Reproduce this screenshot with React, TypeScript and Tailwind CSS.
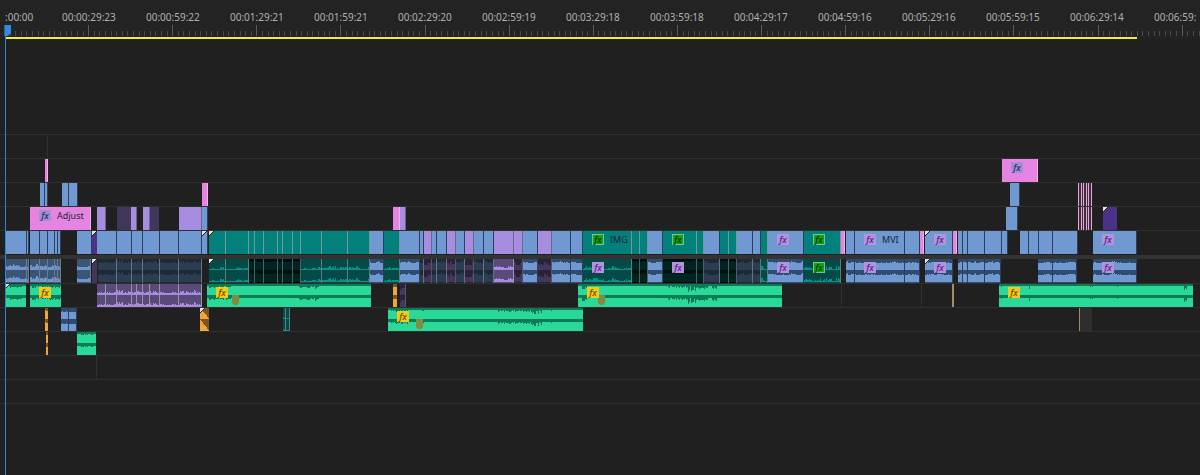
import clsx from "clsx";

type Kind =
  | "blue"
  | "teal"
  | "pink"
  | "purple"
  | "dim"
  | "indigo"
  | "stripe"
  | "ghost"
  | "blueLow"
  | "blueHigh"
  | "navy"
  | "tealLow"
  | "black"
  | "plum"
  | "purpleLow"
  | "green"
  | "orange"
  | "tan"
  | "grey";

type Extra = {
  fx?: "violet" | "green" | "yellow" | "plain";
  label?: string;
  corner?: boolean;
  marker?: number;
  ramp?: boolean;
  // [offset, width, depth]
  dips?: number[][];
};

type ClipData = [number, number, Kind, Extra?];

const kinds: Record<Kind, string> = {
  blue: "bg-[#7099d1] border-r border-[#2c3f5c]",
  teal: "bg-[#02807c] border-r border-[#6f9c99]",
  pink: "bg-[#e584e2] border-r border-[#efb4ea]",
  purple: "bg-[#a78de0] border-r border-[#6f6390]",
  dim: "bg-[#40375a]",
  indigo: "bg-[#4c3189]",
  stripe: "bg-[#45293f] border-l border-[#dcaed6]",
  ghost: "bg-[#303030]",
  blueLow: "bg-[#3b5576] border-r border-[#6c7b8f]",
  blueHigh: "bg-[#2f4b70] border-r border-[#2c3f5c]",
  navy: "bg-[#1c2937] border-r border-[#66717f]",
  tealLow: "bg-[#044b48] border-r border-[#56807e]",
  black: "bg-[#01100f] border-r border-[#4d6260]",
  plum: "bg-[#2a2238] border-r border-[#5a5268]",
  purpleLow: "bg-[#594a79] border-r border-[#9a92aa]",
  green: "bg-[#0c7a55]",
  orange: "bg-[#7d5320]",
  tan: "bg-[#a58a6c]",
  grey: "bg-[#2e2e2d]",
};

// level = usual height of the wave in one channel, jitter = how far it moves
const waves: Partial<
  Record<Kind, { level: number; jitter: number; color: string }>
> = {
  blueLow: { level: 3, jitter: 3, color: "#6f97cc" },
  blueHigh: { level: 7, jitter: 2, color: "#7099d1" },
  navy: { level: 7, jitter: 3, color: "#2c3d52" },
  tealLow: { level: 1, jitter: 4, color: "#0a8f89" },
  black: { level: 8, jitter: 2, color: "#022421" },
  plum: { level: 5, jitter: 5, color: "#44385a" },
  purpleLow: { level: 2, jitter: 3, color: "#a78de0" },
  green: { level: 9, jitter: 0, color: "#2ad897" },
  orange: { level: 7, jitter: 4, color: "#eda63a" },
};

const v5: ClipData[] = [[47, 48, "ghost"]];

const v4: ClipData[] = [
  [45, 48, "pink"],
  [1002, 1038, "pink", { fx: "plain" }],
];

const stripes: ClipData[] = [
  [1078, 1081, "stripe"],
  [1081, 1083, "stripe"],
  [1083, 1086, "stripe"],
  [1086, 1088, "stripe"],
  [1088, 1091, "stripe"],
  [1091, 1092, "stripe"],
];

const v3: ClipData[] = [
  [40, 45, "blue"],
  [45, 48, "blue"],
  [62, 69, "blue"],
  [69, 78, "blue"],
  [202, 208, "pink"],
  [1010, 1020, "blue"],
  ...stripes,
];

const v2: ClipData[] = [
  [30, 91, "pink", { fx: "plain", label: "Adjust" }],
  [97, 106, "purple"],
  [117, 131, "dim"],
  [131, 137, "purple"],
  [143, 150, "purple"],
  [150, 159, "dim"],
  [179, 202, "purple"],
  [202, 208, "blue"],
  [393, 400, "pink"],
  [400, 406, "purple"],
  [1006, 1018, "blue"],
  ...stripes,
  [1103, 1117, "indigo", { corner: true }],
];

const v1: ClipData[] = [
  [5, 27, "blue"],
  [27, 29, "blue"],
  [30, 40, "blue"],
  [40, 48, "blue"],
  [48, 55, "blue"],
  [55, 58, "blue"],
  [58, 61, "blue"],
  [77, 92, "blue"],
  [92, 97, "indigo", { corner: true }],
  [97, 117, "blue"],
  [117, 132, "blue"],
  [132, 143, "blue"],
  [143, 160, "blue"],
  [160, 179, "blue"],
  [179, 202, "blue"],
  [202, 208, "blue", { corner: true }],
  [209, 226, "teal", { corner: true }],
  [226, 249, "teal"],
  [249, 255, "teal"],
  [255, 264, "teal"],
  [264, 278, "teal"],
  [278, 283, "teal"],
  [283, 293, "teal"],
  [293, 301, "teal"],
  [301, 322, "teal"],
  [322, 348, "teal"],
  [348, 370, "teal"],
  [370, 384, "blue"],
  [384, 400, "teal"],
  [400, 420, "blue"],
  [420, 424, "blue"],
  [424, 432, "purple"],
  [432, 437, "blue"],
  [437, 447, "blue"],
  [447, 456, "purple"],
  [456, 465, "blue"],
  [465, 474, "purple"],
  [474, 484, "blue"],
  [484, 494, "blue"],
  [494, 514, "purple"],
  [514, 523, "purple"],
  [523, 538, "blue"],
  [538, 552, "purple"],
  [552, 571, "blue"],
  [571, 583, "blue"],
  [583, 632, "teal", { fx: "green", label: "IMG" }],
  [632, 640, "teal"],
  [640, 648, "teal"],
  [648, 663, "blue"],
  [663, 697, "teal", { fx: "green" }],
  [697, 704, "teal"],
  [704, 720, "blue"],
  [720, 729, "teal"],
  [729, 737, "teal"],
  [737, 753, "blue"],
  [753, 761, "blue"],
  [761, 768, "teal"],
  [768, 804, "blue", { fx: "violet" }],
  [804, 841, "teal", { fx: "green" }],
  [841, 845, "pink"],
  [846, 855, "blue"],
  [855, 905, "blue", { fx: "violet", label: "MVI" }],
  [905, 920, "blue"],
  [920, 924, "pink"],
  [925, 953, "blue", { fx: "violet", corner: true }],
  [953, 957, "pink"],
  [958, 963, "blue"],
  [963, 968, "blue"],
  [968, 985, "blue"],
  [985, 1002, "blue"],
  [1002, 1008, "blue"],
  [1020, 1029, "blue"],
  [1029, 1039, "blue"],
  [1039, 1053, "blue"],
  [1053, 1078, "blue"],
  [1093, 1137, "blue", { fx: "violet" }],
];

const a1: ClipData[] = [
  [5, 27, "blueLow"],
  [27, 29, "blueLow"],
  [30, 40, "blueLow"],
  [40, 48, "blueLow"],
  [48, 55, "blueLow"],
  [55, 58, "blueLow"],
  [58, 61, "blueLow"],
  [77, 91, "blueLow"],
  [92, 97, "dim", { corner: true }],
  [98, 117, "navy"],
  [117, 132, "navy"],
  [132, 143, "navy"],
  [143, 160, "navy"],
  [160, 179, "navy"],
  [179, 202, "navy"],
  [209, 226, "tealLow", { corner: true }],
  [226, 249, "tealLow"],
  [249, 255, "black"],
  [255, 264, "black"],
  [264, 278, "black"],
  [278, 283, "black"],
  [283, 293, "black"],
  [293, 301, "black"],
  [301, 322, "tealLow"],
  [322, 348, "tealLow"],
  [348, 370, "tealLow"],
  [370, 384, "blueHigh"],
  [384, 400, "tealLow"],
  [400, 420, "blueHigh"],
  [420, 424, "navy"],
  [424, 432, "plum"],
  [432, 437, "navy"],
  [437, 447, "navy"],
  [447, 456, "plum"],
  [456, 465, "navy"],
  [465, 474, "plum"],
  [474, 484, "navy"],
  [484, 494, "navy"],
  [494, 514, "purpleLow"],
  [514, 523, "plum"],
  [523, 538, "blueHigh"],
  [538, 552, "plum"],
  [552, 571, "blueHigh"],
  [571, 583, "blueHigh"],
  [583, 632, "tealLow", { fx: "violet" }],
  [632, 640, "black"],
  [640, 648, "black"],
  [648, 663, "blueHigh"],
  [663, 697, "black", { fx: "violet" }],
  [697, 704, "black"],
  [704, 720, "navy"],
  [720, 729, "black"],
  [729, 737, "black"],
  [737, 753, "navy"],
  [753, 761, "navy"],
  [761, 768, "tealLow"],
  [768, 804, "blueHigh", { fx: "violet" }],
  [804, 841, "tealLow", { fx: "green" }],
  [846, 855, "blueHigh"],
  [855, 905, "blueHigh", { fx: "violet" }],
  [905, 920, "blueHigh"],
  [925, 953, "blueHigh", { fx: "violet", corner: true }],
  [958, 963, "blueHigh"],
  [963, 968, "blueHigh"],
  [968, 985, "blueHigh"],
  [985, 1001, "blueHigh"],
  [1038, 1053, "blueHigh"],
  [1053, 1077, "blueHigh"],
  [1093, 1137, "blueHigh", { fx: "violet" }],
];

const a2: ClipData[] = [
  [5, 26, "green", { corner: true, dips: [[5, 12, 2]] }],
  [30, 61, "green", { fx: "yellow", dips: [[2, 28, 2]] }],
  [97, 106, "purpleLow"],
  [106, 117, "purpleLow"],
  [117, 132, "purpleLow"],
  [132, 137, "purpleLow"],
  [137, 143, "purpleLow"],
  [143, 150, "purpleLow"],
  [150, 160, "purpleLow"],
  [160, 179, "purpleLow"],
  [179, 202, "purpleLow"],
  [207, 371, "green", { fx: "yellow", marker: 25, dips: [[2, 22, 2], [92, 20, 2], [104, 6, 3]] }],
  [393, 397, "orange"],
  [400, 406, "plum"],
  [578, 782, "green", { fx: "yellow", marker: 20, dips: [[4, 5, 4], [90, 40, 3], [110, 8, 6], [133, 6, 3]] }],
  [841, 842, "ghost"],
  [921, 922, "ghost"],
  [952, 954, "tan"],
  [999, 1193, "green", { fx: "yellow", dips: [[1, 2, 4], [30, 2, 3], [88, 6, 1], [117, 2, 1], [185, 3, 4]] }],
];

const a3: ClipData[] = [
  [45, 48, "orange"],
  [61, 69, "blueHigh"],
  [69, 77, "blueHigh"],
  [200, 209, "orange", { ramp: true, corner: true }],
  [283, 286, "tealLow"],
  [286, 290, "tealLow"],
  [388, 583, "green", { fx: "yellow", marker: 28, dips: [[2, 18, 2], [34, 2, 1], [110, 32, 2], [142, 12, 3], [145, 6, 5], [163, 2, 1]] }],
  [1079, 1080, "tan"],
  [1080, 1092, "grey"],
];

const a4: ClipData[] = [
  [46, 48, "orange"],
  [77, 96, "green", { dips: [[2, 14, 1]] }],
];

const a5: ClipData[] = [[96, 97, "ghost"]];

const times = [
  "00:00:29:23",
  "00:00:59:22",
  "00:01:29:21",
  "00:01:59:21",
  "00:02:29:20",
  "00:02:59:19",
  "00:03:29:18",
  "00:03:59:18",
  "00:04:29:17",
  "00:04:59:16",
  "00:05:29:16",
  "00:05:59:15",
  "00:06:29:14",
  "00:06:59:",
];

function noise(n: number) {
  const x = Math.sin(n * 12.9898) * 43758.5453;
  return x - Math.floor(x);
}

function wavePath(clip: ClipData, bottom: number, max: number) {
  const [start, end, kind, extra] = clip;
  const wave = waves[kind]!;
  const width = end - start;
  let d = `M0 ${bottom}`;
  for (let x = 0; x < width; x++) {
    const slow = noise(Math.floor((start + x) / 4) + 7);
    let h = wave.level + Math.round(wave.jitter * slow * noise(start + x));
    if (extra?.ramp) h = Math.round(max * (1 - x / width));
    extra?.dips?.forEach(([at, w, depth]) => {
      if (x >= at && x < at + w)
        h = Math.min(h, wave.level - Math.round(depth * noise(start + x * 3)));
    });
    d += `V${bottom - Math.min(h, max)}H${x + 1}`;
  }
  return d + `V${bottom}Z`;
}

function Waveform({ clip }: { clip: ClipData }) {
  const wave = waves[clip[2]];
  if (!wave) return null;
  return (
    <svg
      className="absolute inset-0 h-full w-full"
      shapeRendering="crispEdges"
      aria-hidden="true"
    >
      <path d={wavePath(clip, 11, 11)} fill={wave.color} />
      <path d={wavePath(clip, 23, 11)} fill={wave.color} />
    </svg>
  );
}

const badges = {
  violet: "bg-[#b294dc] text-[#5a1f8f]",
  plain: "bg-[#a48fd6] text-[#2f2c66]",
  green: "bg-[#14a014] text-[#063c06] ring-1 ring-inset ring-[#7fc08a]",
  yellow: "bg-[#f5c918] text-[#6b4a00]",
};

function Badge({ color }: { color: keyof typeof badges }) {
  return (
    <span
      className={clsx(
        "relative flex h-[11px] w-[12px] shrink-0 items-center justify-center text-[9px] leading-none font-medium italic",
        badges[color]
      )}
    >
      fx
    </span>
  );
}

function Clip({ clip, gap }: { clip: ClipData; gap: number }) {
  const [start, end, kind, extra] = clip;
  return (
    <div
      className={clsx("relative h-full shrink-0 overflow-hidden", kinds[kind])}
      style={{ marginLeft: gap, width: end - start }}
    >
      <Waveform clip={clip} />
      {extra?.corner && (
        <svg className="absolute top-0 left-0" width="5" height="5" aria-hidden="true">
          <path d="M0 0H5L0 5Z" fill="#e4e4e4" />
          <path d="M5 0L0 5" stroke="#222" />
        </svg>
      )}
      {extra?.marker && (
        <svg
          className="absolute bottom-[2px]"
          style={{ left: extra.marker }}
          width="7"
          height="10"
          aria-hidden="true"
        >
          <path d="M0 0H7V8L5 10H2L0 8Z" fill="#858b3e" />
        </svg>
      )}
      {extra?.fx && (
        <div className="flex items-center gap-1.5 pt-[3px] pl-[9px]">
          <Badge color={extra.fx} />
          {extra.label && (
            <span className="text-[9px] leading-none text-[#1d2430]">
              {extra.label}
            </span>
          )}
        </div>
      )}
    </div>
  );
}

function Track({ clips, first }: { clips: ClipData[]; first?: boolean }) {
  return (
    <div
      className={clsx(
        "flex h-6 overflow-hidden",
        !first && "border-t border-[#303030]"
      )}
    >
      {clips.map((clip, i) => (
        <Clip
          key={clip[0]}
          clip={clip}
          gap={clip[0] - (i > 0 ? clips[i - 1][1] : 0)}
        />
      ))}
    </div>
  );
}

function Ruler() {
  const ticks = Array.from({ length: 360 }, (_, i) => i);
  return (
    <div className="bg-[#232323]">
      <div className="flex h-[25px] overflow-hidden pt-[10px] text-[10px] leading-[15px] text-[#b0b0b0]">
        <span className="w-[62px] shrink-0 pl-[5px]">:00:00</span>
        {times.map((t) => (
          <span key={t} className="w-[84px] shrink-0">
            {t}
          </span>
        ))}
      </div>
      <svg className="block h-3 w-full" aria-hidden="true">
        {ticks.map((i) => (
          <rect
            key={i}
            x={Math.round(4 + i * 5.608)}
            y={i % 15 === 0 ? 0 : 6}
            width="1"
            height={i % 15 === 0 ? 11 : 5}
            fill={i % 15 === 0 ? "#5a5a5a" : "#4a4a4a"}
          />
        ))}
      </svg>
      <div className="ml-[5px] h-[2px] w-[1132px] bg-[#f0ee2e]" />
    </div>
  );
}

function Playhead() {
  return (
    <div className="absolute inset-y-0 left-[5px] flex flex-col pt-[25px]">
      <svg className="block shrink-0" width="7" height="11" aria-hidden="true">
        <path d="M0 0H6V8L3 11H0Z" fill="#2d8ceb" />
      </svg>
      <div className="w-px grow bg-[#2d86d2]" />
    </div>
  );
}

export default function App() {
  return (
    <main className="relative min-h-screen overflow-hidden bg-[#202020] font-['Noto_Sans',sans-serif]">
      <Ruler />
      <section className="pt-[95px]" aria-label="Video tracks">
        <Track clips={v5} />
        <Track clips={v4} />
        <Track clips={v3} />
        <Track clips={v2} />
        <Track clips={v1} />
      </section>
      <div className="mt-px h-1 bg-[#333333]" />
      <section className="border-b border-[#303030]" aria-label="Audio tracks">
        <Track clips={a1} first />
        <Track clips={a2} />
        <Track clips={a3} />
        <Track clips={a4} />
        <Track clips={a5} />
        <Track clips={[]} />
      </section>
      <Playhead />
    </main>
  );
}
